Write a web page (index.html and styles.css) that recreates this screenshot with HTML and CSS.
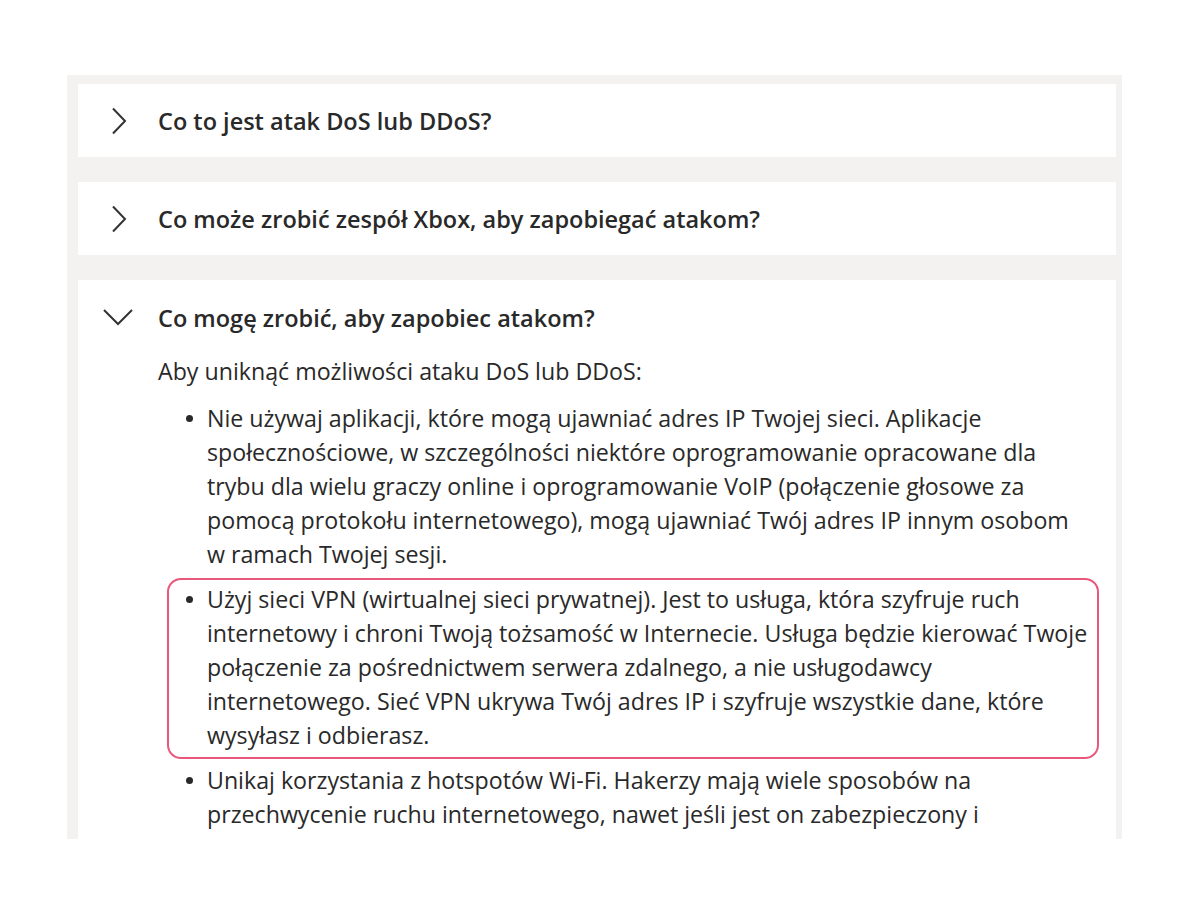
FILE: index.html
```html
<!DOCTYPE html>
<html lang="pl">
<head>
<meta charset="utf-8">
<title>FAQ</title>
<link rel="stylesheet" href="styles.css">
</head>
<body>
<div class="faq">
  <section class="card">
    <div class="card-head">
      <span class="chev"><svg width="30" height="28" viewBox="0 0 30 28"><path d="M10 1.5 L22 14 L10 26.5" fill="none" stroke="#333" stroke-width="2"/></svg></span>
      <h2 class="title">Co to jest atak DoS lub DDoS?</h2>
    </div>
  </section>
  <section class="card">
    <div class="card-head">
      <span class="chev"><svg width="30" height="28" viewBox="0 0 30 28"><path d="M10 1.5 L22 14 L10 26.5" fill="none" stroke="#333" stroke-width="2"/></svg></span>
      <h2 class="title">Co może zrobić zespół Xbox, aby zapobiegać atakom?</h2>
    </div>
  </section>
  <section class="card open">
    <div class="card-head">
      <span class="chev"><svg width="30" height="28" viewBox="0 0 30 28"><path d="M1 6 L15 20 L29 6" fill="none" stroke="#333" stroke-width="2"/></svg></span>
      <h2 class="title">Co mogę zrobić, aby zapobiec atakom?</h2>
    </div>
    <div class="card-body">
      <p class="intro">Aby uniknąć możliwości ataku DoS lub DDoS:</p>
      <ul class="tips">
        <li>Nie używaj aplikacji, które mogą ujawniać adres IP Twojej sieci. Aplikacje społecznościowe, w szczególności niektóre oprogramowanie opracowane dla trybu dla wielu graczy online i oprogramowanie VoIP (połączenie głosowe za pomocą protokołu internetowego), mogą ujawniać Twój adres IP innym osobom w ramach Twojej sesji.</li>
        <li class="highlight">Użyj sieci VPN (wirtualnej sieci prywatnej). Jest to usługa, która szyfruje ruch internetowy i chroni Twoją tożsamość w Internecie. Usługa będzie kierować Twoje połączenie za pośrednictwem serwera zdalnego, a nie usługodawcy internetowego. Sieć VPN ukrywa Twój adres IP i szyfruje wszystkie dane, które wysyłasz i odbierasz.</li>
        <li>Unikaj korzystania z hotspotów Wi-Fi. Hakerzy mają wiele sposobów na przechwycenie ruchu internetowego, nawet jeśli jest on zabezpieczony i chroniony hasłem.</li>
      </ul>
    </div>
  </section>
</div>
</body>
</html>
```
FILE: styles.css
```css
* { box-sizing: border-box; }
html, body { margin: 0; padding: 0; background: #ffffff; }
body {
  font-family: "Open Sans", "Noto Sans", sans-serif;
  color: #292929;
}
.faq {
  margin: 75px 0 0 67px;
  width: 1055px;
  height: 764px;
  overflow: hidden;
  background: #f3f2f1;
  padding: 9px 6px 0 11px;
}
.card {
  background: #ffffff;
  margin-bottom: 25px;
}
.card.open { min-height: 700px; }
.card-head {
  display: flex;
  align-items: center;
  height: 73px;
  padding: 0 28px 0 25px;
  gap: 25px;
}
.chev {
  width: 30px;
  height: 28px;
  display: flex;
  flex: none;
}
.chev svg { display: block; }
.title {
  margin: 0;
  font-size: 23.5px;
  font-weight: 600;
  line-height: 32px;
}
.card.open .card-head { height: 76px; }
.card-body {
  padding: 0 28px 0 80px;
  font-size: 23.2px;
  line-height: 34px;
}
.intro { margin: -2px 0 13px 0; }
.tips {
  list-style: none;
  margin: 0;
  padding: 0 0 0 49px;
}
.tips li {
  position: relative;
  margin-bottom: 11px;
}
.tips li::before {
  content: "";
  position: absolute;
  left: -21px;
  top: 14px;
  width: 7px;
  height: 7px;
  border-radius: 50%;
  background: #292929;
}
.tips li.highlight::after {
  content: "";
  position: absolute;
  left: -40px;
  top: -4px;
  right: -11px;
  bottom: -7px;
  border: 2px solid #e9587b;
  border-radius: 14px;
  pointer-events: none;
}
```
